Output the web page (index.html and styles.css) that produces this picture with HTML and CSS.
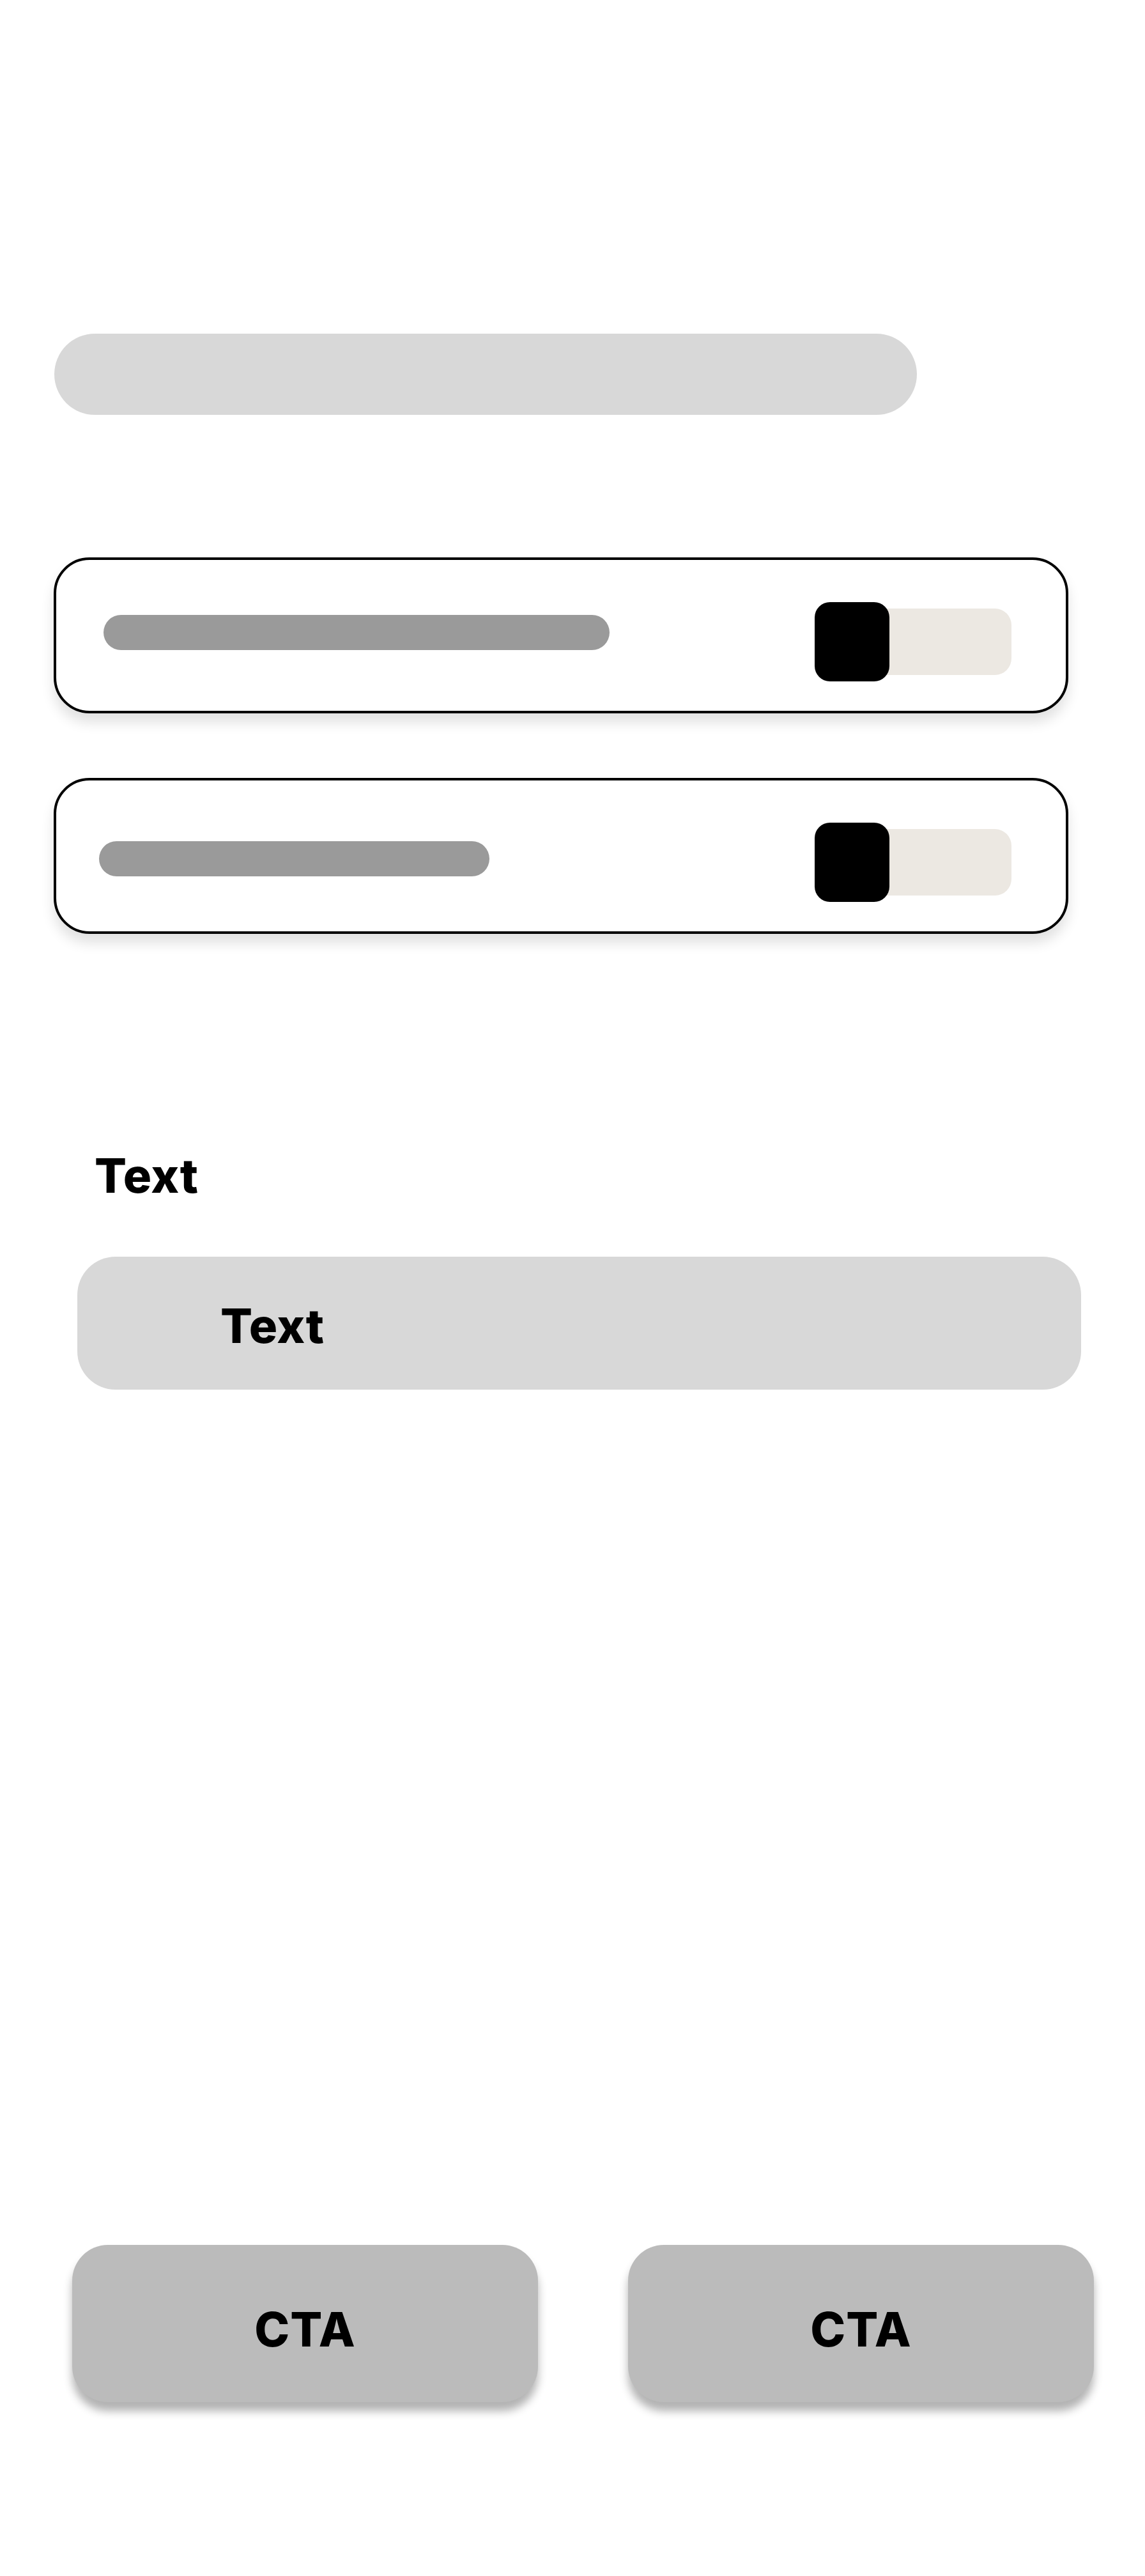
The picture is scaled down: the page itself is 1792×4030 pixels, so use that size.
FILE: index.html
```html
<!DOCTYPE html>
<html lang="en">
<head>
<meta charset="utf-8">
<title>Settings</title>
<link rel="stylesheet" href="styles.css">
</head>
<body>
<main class="page">
  <div class="search-bar"></div>

  <section class="cards">
    <div class="card">
      <div class="line line-long"></div>
      <div class="toggle"><div class="track"><div class="knob"></div></div></div>
    </div>
    <div class="card card-second">
      <div class="line line-short"></div>
      <div class="toggle"><div class="track"><div class="knob"></div></div></div>
    </div>
  </section>

  <section class="field">
    <h2 class="field-label">Text</h2>
    <div class="field-box"><span class="field-text">Text</span></div>
  </section>

  <div class="actions">
    <button class="cta">CTA</button>
    <button class="cta">CTA</button>
  </div>
</main>
</body>
</html>
```

FILE: styles.css
```css
html, body {
  margin: 0;
  padding: 0;
  background: #ffffff;
}

.page {
  width: 1792px;
  height: 4030px;
  font-family: Inter, "Noto Sans", sans-serif;
  color: #000;
  display: flex;
  flex-direction: column;
}

.search-bar {
  margin: 522px 0 0 85px;
  width: 1350px;
  height: 127px;
  border-radius: 64px;
  background: #d8d8d8;
}

.cards {
  margin: 223px 0 0 84px;
  width: 1588px;
  display: flex;
  flex-direction: column;
  gap: 101px;
}

.card {
  box-sizing: border-box;
  height: 244px;
  border: 4px solid #000;
  border-radius: 56px;
  background: #fff;
  box-shadow: 0 14px 20px rgba(0, 0, 0, 0.12);
  display: flex;
  align-items: center;
  justify-content: space-between;
  padding: 0 85px 0 74px;
}

.card-second {
  padding-left: 67px;
}

.line {
  height: 55px;
  border-radius: 28px;
  background: #9a9a9a;
}

.line-long {
  width: 792px;
  margin-bottom: 9px;
}

.line-short {
  width: 611px;
  margin-top: 9px;
}

.toggle {
  margin-top: 20px;
}

.track {
  width: 308px;
  height: 104px;
  border-radius: 26px;
  background: #ece8e2;
  display: flex;
  align-items: center;
}

.knob {
  flex: none;
  width: 117px;
  height: 124px;
  border-radius: 24px;
  background: #000;
}

.field {
  margin-top: 341px;
  display: flex;
  flex-direction: column;
}

.field-label {
  margin: 0 0 0 148px;
  font-size: 74px;
  line-height: 74px;
  font-weight: 800;
  letter-spacing: 0.5px;
}

.field-box {
  margin: 90px 0 0 121px;
  width: 1571px;
  height: 208px;
  border-radius: 60px;
  background: #d8d8d8;
  display: flex;
  align-items: center;
  padding: 8px 0 0 224px;
  box-sizing: border-box;
}

.field-text {
  font-size: 74px;
  line-height: 74px;
  font-weight: 800;
  letter-spacing: 0.5px;
}

.actions {
  margin: 1338px 0 0 113px;
  display: flex;
  gap: 141px;
}

.cta {
  width: 729px;
  height: 246px;
  border: none;
  border-radius: 56px;
  background: #bbbbbb;
  box-shadow: 0 14px 14px rgba(0, 0, 0, 0.3);
  font-family: Inter, "Noto Sans", sans-serif;
  font-size: 74px;
  line-height: 74px;
  font-weight: 800;
  letter-spacing: 1px;
  color: #000;
  padding: 18px 0 0 0;
}
```
